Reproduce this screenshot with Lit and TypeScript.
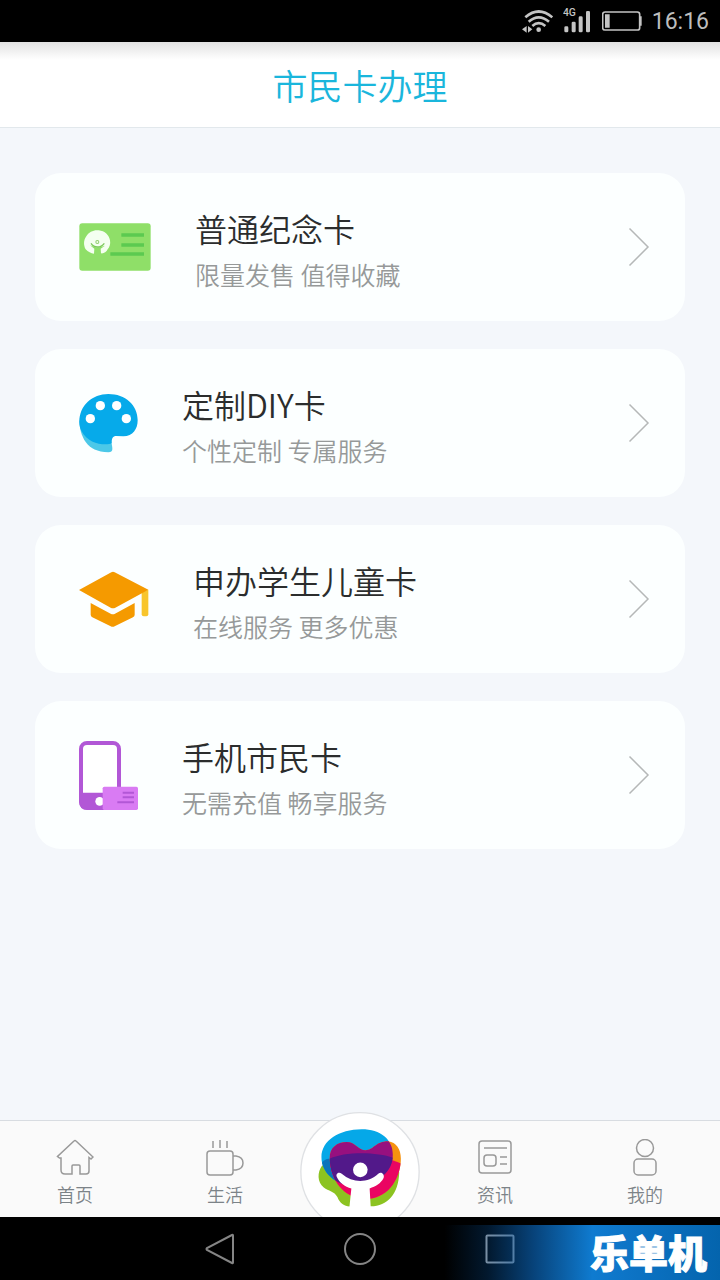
import { LitElement, html, css, svg } from "lit";
import { customElement, property } from "lit/decorators.js";

const cardIcon = html`<svg width="72" height="48" viewBox="0 0 216 144" aria-hidden="true">
  <rect x="1" y="1" width="214" height="142" rx="9" fill="#8fdf68" />
  <path d="M127 36h68M127 66h68M94 93h101" stroke="#5cca50" stroke-width="11" fill="none" />
  <path d="M20 79c-6-12-7-26 1-38 9-15 24-21 38-19 19 2 31 14 34 30 2 11-1 20-7 27-4 9-12 13-20 12l-1-14 13-9-17 5H49l-16-6 13 10-1 15c-9-1-18-5-25-13Z" fill="#f4fff0" />
  <circle cx="55" cy="57" r="6" fill="#8fce6c" /><circle cx="55" cy="57" r="3" fill="#f4fff0" />
  <path d="M36 61c10 14 28 15 40 0" stroke="#7cc95a" stroke-width="4" fill="none" />
</svg>`;

const paletteIcon = html`<svg width="59" height="60" viewBox="0 0 177 180" aria-hidden="true">
  <path d="M1 82C2 128 22 178 88 178c9 0 13-4 12-13l-3-20L40 100Z" fill="#4cc8e8" />
  <path d="M88 3C40 3 1 37 1 87c0 10 2 18 6 26 16 31 46 41 73 41 7 0 14-1 18-4 0-14 3-21 14-21l21 1c29 0 43-22 43-48C176 36 139 3 88 3Z" fill="#06aaea" />
  <g fill="#fff"><circle cx="64" cy="38" r="14" /><circle cx="113" cy="38" r="14" /><circle cx="34" cy="77" r="14" /><circle cx="142" cy="77" r="14" /></g>
</svg>`;

const gradIcon = html`<svg width="70" height="56" viewBox="0 0 210 168" aria-hidden="true">
  <path d="M188 62l20-6v74q0 6-6 6h-8q-6 0-6-6Z" fill="#f8c52c" />
  <path d="M0 57 97 4q5-3 10 0l101 52-99 54q-7 4-14 0Z" fill="#f59a00" />
  <path d="M35 96l60 32q7 3 13 0l59-32v35q0 5-5 8l-55 27q-6 3-12 0L40 139q-5-3-5-8Z" fill="#f59a00" />
</svg>`;

const phoneIcon = html`<svg width="59" height="69" viewBox="0 0 177 207" aria-hidden="true">
  <rect x="6" y="6" width="114" height="195" rx="18" fill="#fff" stroke="#b257d6" stroke-width="12" />
  <path d="M1 155h124v51H24Q1 206 1 183Z" fill="#b257d6" />
  <circle cx="62" cy="181" r="13" fill="#fff" />
  <rect x="71" y="137" width="106" height="70" rx="5" fill="#d97bf3" />
  <path d="M131 155h34M131 169h34M115 184h50" stroke="#b257d6" stroke-width="6" />
</svg>`;

const homeIcon = svg`<path d="M5 19H3.500L1.500 17.500 18 2q1-1 2 0l17 16-2 2-2-1.500V32q0 3-3 3h-6V27q0-1-1-1h-6q-1 0-1 1v8h-7q-4 0-4-4Z" />`;
const cupIcon = svg`<rect x="1" y="12" width="26" height="24" rx="3" /><path d="M27 17h3q7 1 7 7t-7 7h-3M7 2v7M14 1v8M21 2v7" />`;
const newsIcon = svg`<rect x="3" y="2" width="32" height="32" rx="3" /><path d="M8 9h23M24 18h7M24 25h7" /><rect x="8" y="16" width="12" height="11" rx="3" />`;
const meIcon = svg`<circle cx="19" cy="9" r="8.500" /><rect x="8" y="20" width="22" height="16" rx="4" />`;

@customElement("service-card")
class ServiceCard extends LitElement {
  @property() heading = "";
  @property() note = "";
  @property({ attribute: false }) icon: unknown;

  static styles = css`
    :host { display: block; font-family: "Noto Sans CJK SC", sans-serif; }
    .card {
      display: flex; align-items: center; height: 148px; box-sizing: border-box;
      padding: 0 35px 0 44px; border-radius: 26px; background: #fcffff;
      color: inherit; text-decoration: none;
    }
    .icon { display: flex; }
    .text { flex: 1; margin-left: 44px; padding-top: 6px; }
    .heading { margin: 0; font-size: 32px; line-height: 48px; font-weight: 350; color: #2b2d2d; }
    .note { margin: 0; font-size: 25px; line-height: 44px; font-weight: 350; color: #969999; }
  `;

  render() {
    return html`<a class="card" href="#">
      <span class="icon">${this.icon}</span>
      <div class="text"><h2 class="heading">${this.heading}</h2><p class="note">${this.note}</p></div>
      <svg width="22" height="40" viewBox="0 0 22 40" fill="none" stroke="#b5b8b8" stroke-width="1.500" aria-hidden="true"><path d="M1.500 1.500 20 20 1.500 38.500" /></svg>
    </a>`;
  }
}

@customElement("app-root")
class AppRoot extends LitElement {
  static styles = css`
    :host {
      display: flex; flex-direction: column; min-height: 100vh; background: #f4f7fb;
      font-family: Roboto, "Noto Sans CJK SC", sans-serif;
    }
    .status {
      display: flex; justify-content: flex-end; align-items: center; height: 42px; gap: 10px;
      padding-right: 11px; background: #000; color: #bdbdbd; font-size: 23px;
    }
    .status svg { display: block; }
    .net { font-size: 31px; font-weight: 500; }
    .header {
      height: 85px; border-bottom: 1px solid #e2e8ec;
      background: linear-gradient(#e2e2e2, #fff 18px);
    }
    .title { margin: 0; padding-top: 9px; text-align: center; font-size: 35px; line-height: 76px; font-weight: 350; color: #1ab6dc; }
    .list { flex: 1; display: flex; flex-direction: column; gap: 28px; padding: 45px 35px; }
    .tabs {
      display: flex; height: 96px; border-top: 1px solid #d8dce1; background: #fafafa;
    }
    .tab {
      flex: 1; display: flex; flex-direction: column; align-items: center; padding-top: 18px;
      color: #7c8388; text-decoration: none; font-size: 18px; line-height: 28px; font-weight: 350;
    }
    .tab svg { margin-bottom: 5px; fill: none; stroke: #999; stroke-width: 1.500px; }
    .center { width: 120px; display: flex; align-items: flex-end; align-self: flex-end; }
    .system { position: relative; display: flex; justify-content: center; height: 63px; background: #000; }
    .key { width: 140px; padding: 0; border: 0; background: none; color: #858585; }
    .key svg { display: block; margin: 0 auto; fill: none; stroke: currentColor; stroke-width: 2px; }
    .mark {
      position: absolute; right: 0; bottom: 0; width: 290px; height: 55px; box-sizing: border-box;
      padding-right: 13px; text-align: right; pointer-events: none;
      background: linear-gradient(90deg, #064a8c00 5%, #064a8c55 20%, #0a5ca8bb 36%, #0f7bd0 56%, #0d74c6 68%, #0464ad);
      color: #fff; font-size: 39px; line-height: 60px; font-weight: 900;
      -webkit-text-stroke: 1px #fff;
    }
  `;

  render() {
    return html`
      <div class="status">
        <svg width="31" height="24" viewBox="68 26 93 72" fill="none" stroke="#c4c4c4" stroke-width="8" aria-label="Wi-Fi">
          <path d="M78 51Q118 16 159 51M88 64Q118 38 149 64M99 77Q118 60 138 77" />
          <circle cx="118" cy="88" r="7" fill="#c4c4c4" stroke="none" />
          <path d="M68 87l14-10v20ZM99 87l-13-10v20Z" fill="#c4c4c4" stroke="none" />
        </svg>
        <svg width="29" height="29" viewBox="186 18 87 87" fill="#c4c4c4" aria-label="4G">
          <rect x="190" y="76" width="12" height="18" rx="4" /><rect x="212" y="62" width="12" height="32" rx="4" />
          <rect x="233" y="46" width="12" height="48" rx="4" /><rect x="255" y="30" width="12" height="64" rx="4" />
          <text class="net" x="186" y="45">4G</text>
        </svg>
        <svg width="40" height="20" viewBox="313 35 120 60" aria-label="Battery">
          <rect x="315" y="38" width="111" height="54" rx="7" fill="none" stroke="#c4c4c4" stroke-width="5" />
          <path d="M322 45h14v40h-14ZM427 51h5v28h-5Z" fill="#c4c4c4" />
        </svg>
        <span>16:16</span>
      </div>
      <header class="header"><h1 class="title">市民卡办理</h1></header>
      <main class="list">
        <service-card heading="普通纪念卡" note="限量发售 值得收藏" .icon=${cardIcon}></service-card>
        <service-card heading="定制DIY卡" note="个性定制 专属服务" .icon=${paletteIcon}></service-card>
        <service-card heading="申办学生儿童卡" note="在线服务 更多优惠" .icon=${gradIcon}></service-card>
        <service-card heading="手机市民卡" note="无需充值 畅享服务" .icon=${phoneIcon}></service-card>
      </main>
      <nav class="tabs">
        ${this.tab("首页", homeIcon)}${this.tab("生活", cupIcon)}
        <a class="center" href="#" aria-label="市民卡">${this.logo()}</a>
        ${this.tab("资讯", newsIcon)}${this.tab("我的", meIcon)}
      </nav>
      <div class="system">
        <button class="key" aria-label="Back"><svg width="32" height="32" viewBox="0 0 32 32"><path d="M29 2.500v27q0 1-1 .5L3 17q-1-1 0-2L28 2q1-.5 1 .5Z" /></svg></button>
        <button class="key" aria-label="Home"><svg width="34" height="34" viewBox="0 0 34 34"><circle cx="17" cy="17" r="15" /></svg></button>
        <button class="key" aria-label="Recent"><svg width="32" height="32" viewBox="0 0 32 32"><rect x="2.500" y="2.500" width="27" height="27" rx="1" stroke="#b0b0b0" /></svg></button>
        <div class="mark">乐单机</div>
      </div>
    `;
  }

  private tab(label: string, icon: unknown) {
    return html`<a class="tab" href="#"><svg width="38" height="38" viewBox="0 0 38 38" aria-hidden="true">${icon}</svg>${label}</a>`;
  }

  private logo() {
    const blue = "M27 105C27 55 80 21 148 21C205 21 242 52 242 98C242 150 195 186 135 190C75 194 27 155 27 105Z";
    const heart = "M52 110C50 78 72 59 103 59C130 59 138 84 160 84C183 84 190 57 228 57C252 60 266 80 266 110C266 160 235 231 160 231C95 231 54 175 52 110Z";
    return html`<svg width="120" height="105" viewBox="-37 -31 360 316" aria-hidden="true">
      <defs>
        <clipPath id="blue"><path d=${blue} /></clipPath>
        <clipPath id="heart"><path d=${heart} /></clipPath>
      </defs>
      <circle cx="143" cy="149" r="178" fill="#fff" stroke="#dfe1e4" stroke-width="4" />
      <path d="M29 130C14 150 14 180 34 196C48 207 66 207 75 225C82 245 98 254 114 253H176C225 250 259 218 261 150L140 120Z" fill="#8cc321" />
      <path d=${blue} fill="#05a8e8" />
      <path d="M20 136C32 112 42 108 54 110L80 200H30Z" fill="#0b74bb" clip-path="url(#blue)" />
      <path d=${heart} fill="#f6920f" />
      <path d="M40 118C90 90 215 98 270 126V235H50Z" fill="#ea0562" clip-path="url(#heart)" />
      <g clip-path="url(#blue)">
        <path d=${heart} fill="#97107f" />
        <path d="M40 116C85 86 200 88 250 110V200H50Z" fill="#52198a" clip-path="url(#heart)" />
      </g>
      <circle cx="144" cy="143" r="22" fill="#fff" />
      <path d="M73 164C69 154 80 148 88 155C122 184 166 184 198 155C207 147 218 157 214 168C206 184 190 194 172 199L177 285H108L117 199C97 194 80 181 73 164Z" fill="#fff" />
    </svg>`;
  }
}
